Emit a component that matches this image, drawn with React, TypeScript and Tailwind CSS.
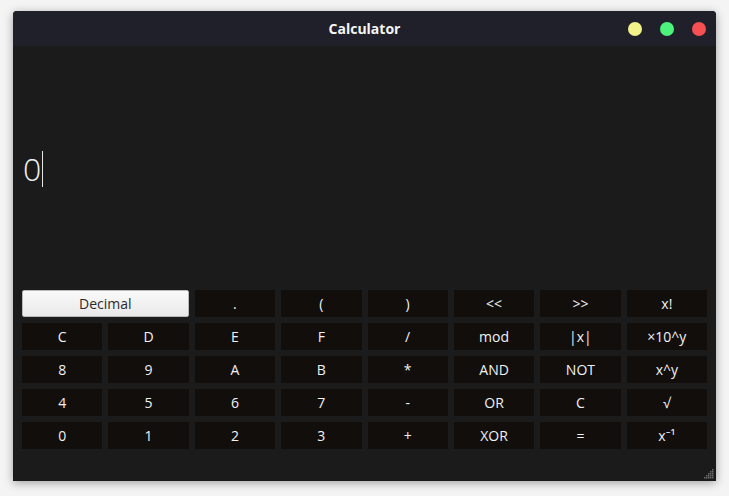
const rows: string[][] = [
  ['.', '(', ')', '<<', '>>', 'x!'],
  ['C', 'D', 'E', 'F', '/', 'mod', '|x|', '×10^y'],
  ['8', '9', 'A', 'B', '*', 'AND', 'NOT', 'x^y'],
  ['4', '5', '6', '7', '-', 'OR', 'C', '√'],
  ['0', '1', '2', '3', '+', 'XOR', '=', 'x⁻¹'],
]

function Key({ label }: { label: string }) {
  return (
    <button
      type="button"
      className="flex h-[27px] items-center justify-center bg-[#110e0c] text-[14px] text-[#f2f2f2]"
    >
      {label}
    </button>
  )
}

function Grip() {
  return (
    <svg width="10" height="10" viewBox="0 0 10 10" className="absolute bottom-[2px] right-[2px]">
      {[
        [8, 0],
        [6, 2], [8, 2],
        [4, 4], [6, 4], [8, 4],
        [2, 6], [4, 6], [6, 6], [8, 6],
        [0, 8], [2, 8], [4, 8], [6, 8], [8, 8],
      ].map(([x, y]) => (
        <rect key={`${x}-${y}`} x={x} y={y} width="1.5" height="1.5" fill="#6b6b6b" />
      ))}
    </svg>
  )
}

export default function App() {
  return (
    <div className="h-[496px] w-[729px] overflow-hidden bg-[#f4f4f4] pl-[13px] pt-[11px] font-['Open_Sans','Noto_Sans',sans-serif]">
      <div className="relative flex h-[470px] w-[703px] flex-col overflow-hidden rounded-t-[4px] bg-[#1b1b1b] shadow-[0_2px_10px_rgba(0,0,0,0.35)]">
        <header className="relative flex h-[35px] shrink-0 items-center justify-center bg-[#1f202a]">
          <span className="text-[14px] font-bold text-[#f5f5f5]">Calculator</span>
          <div className="absolute right-[10px] top-[11px] flex gap-[18px]">
            <span className="h-[14px] w-[14px] rounded-full bg-[#f2f28a]" />
            <span className="h-[14px] w-[14px] rounded-full bg-[#4df27b]" />
            <span className="h-[14px] w-[14px] rounded-full bg-[#f65052]" />
          </div>
        </header>

        <div className="flex flex-1 items-center pl-[10px] pt-[6px]">
          <span className="text-[32px] font-light leading-none text-[#f0f0f0]">0</span>
          <span className="ml-[1px] h-[36px] w-[1px] bg-[#e6e6e6]" />
        </div>

        <div className="grid shrink-0 grid-cols-8 gap-[6px] px-[9px] pb-[32px] pt-[4px]">
          <button
            type="button"
            className="col-span-2 flex h-[27px] items-center justify-center rounded-[2px] border border-[#b9b9b9] bg-gradient-to-b from-[#fafafa] to-[#e9e9e9] text-[14px] text-[#2a2a2a]"
          >
            Decimal
          </button>
          {rows.flat().map((label, i) => (
            <Key key={i} label={label} />
          ))}
        </div>
        <Grip />
      </div>
    </div>
  )
}
